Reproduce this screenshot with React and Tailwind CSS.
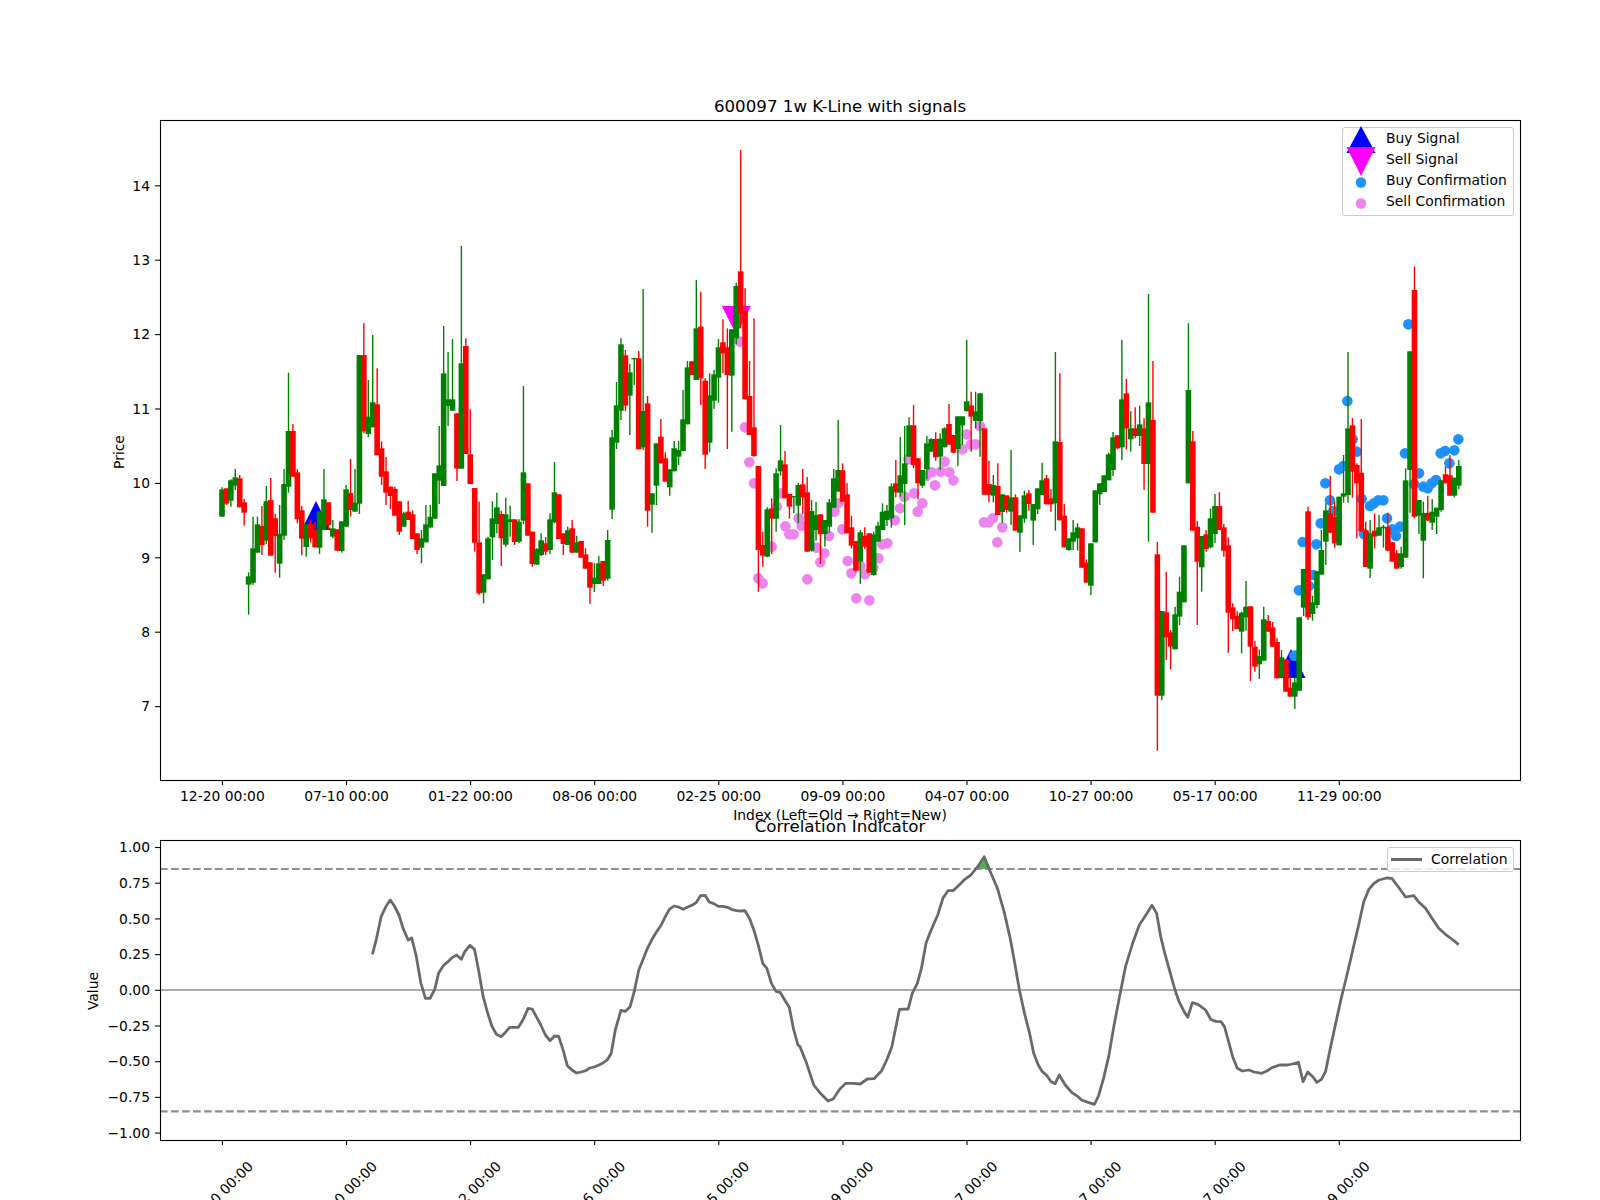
import React from "react";

// candle rows: [isGreen, bodyTop, bodyBottom, wickTop, wickBottom]
// numbers are read off 3x crops, so y = base + n / 3
const rowsA = [
  [1,508,590,502,590],[0,505,551,505,555],[1,481,542,478,560],[1,472,497,447,510],[0,475,562,465,562],[0,547,578,537,617],
  [1,769,794,757,884],[1,685,788,590,794],[1,613,698,590,698],[0,618,675,558,705],[1,544,662,498,672],[0,540,707,474,707],
  [0,595,648,582,758],[1,641,731,555,773],[1,492,647,447,660],[1,333,500,158,518],[0,333,470,312,470],[0,457,598,447,610],
  [0,571,656,558,706],[1,612,681,612,710],[0,612,655,600,668],[0,630,682,605,682],[1,574,683,574,702],[1,538,630,447,630],
  [0,547,615,547,630],[1,625,650,600,655],[0,628,692,628,692],[1,604,693,604,698],[1,508,620,495,620],[0,519,570,417,590],
  [1,548,575,447,575],[1,105,551,105,582],[0,105,334,10,340],[1,290,342,180,352],[1,247,322,45,322],[0,253,406,145,406],
  [0,385,470,364,495],[0,454,518,411,555],[0,500,528,500,567],[0,507,587,500,587],[0,544,635,544,645],[1,580,620,575,620],
  [0,575,600,543,600],[0,583,657,571,657],[0,640,690,640,702],[1,655,683,630,730],[1,613,667,555,667],[1,590,622,555,625],
  [1,460,596,460,596],[1,436,482,318,552],[1,160,498,18,498],[1,238,258,96,318],[1,238,272,57,272],[0,280,446,280,483],
  [1,130,446,-222,446],[0,78,402,55,402],[0,403,492,268,492],[0,504,668,504,695],[0,667,820,545,825],[1,763,818,763,850],
  [1,655,778,650,778],[1,595,652,544,720],[1,562,612,518,640],[0,582,655,572,738],[1,583,674,533,680],[1,598,606,557,650],
  [0,598,666,598,675],[1,605,665,598,670],[1,457,602,198,612],[0,490,647,490,647],[0,635,732,635,740],
];
const rowsB = [
  [1,657,704,655,704],[1,631,675,610,678],[0,640,665,621,675],[1,568,660,550,672],[1,487,577,396,580],[0,493,627,493,627],
  [0,610,642,610,675],[1,601,645,590,645],[0,595,668,570,668],[1,637,668,617,668],[0,633,683,633,683],[0,673,716,655,716],
  [0,697,773,697,822],[1,743,762,700,786],[1,700,762,678,762],[0,693,752,693,768],[1,630,746,600,752],[1,322,539,300,567],
  [1,226,338,156,357],[1,43,242,25,270],[0,76,227,60,243],[1,127,197,102,315],[1,84,88,84,165],[0,85,358,63,358],
  [1,243,352,-123,360],[0,220,542,198,590],[1,490,524,490,608],[1,340,467,340,525],[0,320,400,267,400],[0,385,455,367,455],
  [1,418,472,418,497],[1,355,424,333,424],[1,360,380,333,405],[1,268,363,180,363],[1,112,283,93,283],[0,94,135,94,135],
  [1,-5,150,-150,150],[0,-10,145,-115,225],[0,152,374,145,417],[1,196,338,130,366],[1,133,212,120,237],[1,52,143,27,218],
  [0,37,70,-32,130],[0,52,135,-5,357],[1,-2,137,-2,305],[1,-132,25,-142,43],[0,-176,-50,-540,-5],[0,-58,208,-125,208],
  [0,198,315,93,315],[0,292,378,-35,380],[0,408,660,408,785],[0,645,677,605,710],[1,538,680,532,682],[0,535,566,505,672],
  [1,430,566,415,605],[1,391,424,285,437],[0,403,505,363,505],[0,492,530,492,566],[1,498,502,498,550],[1,465,527,458,580],
  [0,463,502,417,552],[0,487,665,441,665],[1,543,662,510,665],[1,555,600,516,632],[0,553,613,553,702],[1,570,612,570,650],
  [1,517,590,507,608],[1,445,533,417,533],[1,420,485,270,485],[0,421,515,400,515],[0,493,610,460,610],
];
const rowsC = [
  [0,562,617,528,625],[0,603,692,603,697],[1,577,665,570,732],[0,587,620,562,627],[0,580,698,580,698],[1,583,705,575,707],
  [1,557,605,545,605],[1,515,570,490,570],[1,512,540,495,558],[1,439,535,430,563],[0,430,457,360,472],[1,406,458,291,470],
  [1,370,432,258,555],[1,256,350,232,350],[0,256,375,195,385],[0,355,430,355,478],[1,390,437,390,443],[1,310,388,288,418],
  [1,297,335,295,335],[0,297,352,277,362],[1,296,350,280,390],[1,265,322,262,322],[0,252,314,192,314],[0,285,338,285,340],
  [1,229,327,229,378],[1,229,256,229,315],[1,184,213,0,215],[0,196,230,155,335],[1,214,243,155,265],[1,160,243,160,350],
  [0,265,464,265,464],[0,432,464,362,487],[1,435,467,405,487],[0,438,525,370,525],[1,463,516,463,548],[0,466,510,466,518],
  [1,472,515,330,555],[0,472,572,463,572],[1,526,578,526,636],[1,466,536,452,548],[0,460,492,450,512],[1,492,542,492,615],
  [1,445,508,445,522],[1,421,465,368,465],[0,415,493,405,493],[0,475,493,448,515],[1,304,490,36,572],[0,306,541,100,541],
  [0,527,622,492,622],[1,595,630,595,632],[1,577,605,540,630],[1,562,595,550,632],[0,565,683,565,683],[0,668,728,658,728],
  [1,610,737,610,765],[1,451,607,451,607],[1,430,463,430,495],[1,406,456,406,456],[1,343,421,338,421],[1,292,390,276,408],
  [0,286,325,286,328],[1,178,322,0,360],[0,160,265,117,328],[1,265,298,214,335],[0,265,288,202,295],[1,253,288,197,318],
  [0,265,372,235,450],[1,187,372,-138,605],[0,240,518,63,518],
];
const rowsD = [
  [0,673,1097,636,1262],[1,843,1097,843,1110],[0,847,922,726,990],[0,907,950,900,1018],[1,853,958,830,958],[1,785,860,740,885],
  [1,646,817,646,817],[1,180,460,-20,460],[0,334,602,303,602],[0,590,695,573,885],[1,618,712,618,785],[0,613,657,600,665],
  [1,565,652,536,655],[1,528,612,492,640],[0,528,600,487,600],[0,592,662,582,680],[0,646,848,622,968],[0,832,868,820,903],
  [0,858,897,843,897],[1,848,905,845,970],[1,830,862,753,902],[0,829,950,829,1053],[0,950,1010,933,1025],[1,978,1003,958,1047],
  [1,868,992,830,992],[0,873,905,855,905],[0,892,950,876,950],[0,936,1045,925,1045],[1,982,1042,960,1045],[0,988,1085,988,1085],
  [0,1073,1100,1040,1100],[1,1057,1100,1040,1137],[1,862,1082,862,1082],[1,717,833,717,858],[0,544,862,530,870],[1,817,852,797,872],
  [1,724,825,724,835],[1,660,734,600,734],[1,541,635,520,705],[0,550,608,438,610],[0,560,640,515,653],[1,500,646,500,646],
  [1,490,500,375,518],[1,295,495,66,518],[0,286,425,264,503],[0,405,460,400,625],[0,428,605,267,605],[0,600,711,575,711],
  [1,610,716,570,744],[0,602,620,550,655],[1,592,617,555,617],[1,590,595,585,653],[0,591,662,548,662],[0,637,695,637,695],
  [0,670,716,660,716],[1,670,711,650,716],[1,451,683,415,683],[1,64,420,64,548],[0,-120,560,-190,565],[1,510,557,510,612],
  [1,549,632,515,745],[0,549,572,497,572],[1,545,578,507,600],[1,533,560,533,612],[1,451,540,451,545],[0,433,460,410,460],
  [0,436,497,375,497],[1,443,497,443,502],[1,408,467,390,478],
];

const barX = (i) => 222 + 4.433 * i;

const toCandles = (rows, start, base) =>
  rows.map(([up, top, bot, hi, lo], k) => ({
    x: barX(start + k),
    color: up ? "#008000" : "#ff0000",
    top: base + top / 3,
    bot: base + bot / 3,
    hi: base + hi / 3,
    lo: base + lo / 3,
  }));

const candles = [
  ...toCandles(rowsA, 0, 320),
  ...toCandles(rowsB, 71, 330),
  ...toCandles(rowsC, 142, 340),
  ...toCandles(rowsD, 211, 330),
];

const buyDots = [
  [895,328],[883,361],[855,363],[842,370],[868,400],[828,450],[815,460],[803,475],[790,470],[777,430],[762,462],[735,370],
  [745,-17],[720,590],[708,618],[697,598],[681,565],[670,511],[655,511],[642,520],[630,528],[605,507],[612,612],[590,365],
  [578,328],[562,213],[550,408],[537,418],[520,543],[510,511],[496,460],[482,580],[469,643],[428,636],[460,735],[447,768],
  [417,781],[403,977],
].map(([x, y]) => [1160 + x / 3, 330 + y / 3]);

const sellDotsB = [
  [630,35],[645,292],[658,397],[672,460],[685,745],[698,760],[725,650],[740,530],[752,490],[766,589],[778,613],[791,613],
  [806,565],[815,587],[832,748],[860,653],[871,697],[883,670],[897,618],[913,545],[925,520],[937,598],
].map(([x, y]) => [530 + x / 3, 330 + y / 3]);

const sellDotsC = [
  [8,663],[19,700],[34,775],[73,781],[60,703],[46,677],[85,683],[100,655],[112,613],[127,610],[150,541],[165,505],[178,470],
  [207,460],[218,515],[232,490],[243,408],[260,397],[270,436],[287,395],[313,397],[325,421],[299,365],[352,328],[365,283],
  [378,313],[392,313],[405,258],[417,547],[431,547],[444,535],[457,607],[472,562],[190,358],
].map(([x, y]) => [845 + x / 3, 340 + y / 3]);

// correlation line, first half from a crop at x*1.96, y*3
const corrA = [
  [730,463],[738,415],[747,350],[757,318],[765,300],[773,318],[782,345],[790,385],[800,420],[807,414],[816,470],[825,550],
  [834,595],[843,595],[852,568],[860,518],[869,497],[878,485],[887,472],[895,465],[904,478],[911,455],[921,436],[930,448],
  [938,510],[947,590],[955,635],[964,678],[973,703],[982,710],[990,698],[999,682],[1016,682],[1025,660],[1035,625],[1043,627],
  [1052,652],[1060,675],[1069,705],[1078,722],[1087,708],[1095,709],[1104,752],[1112,797],[1121,810],[1130,819],[1139,816],
  [1148,812],[1156,804],[1165,801],[1174,795],[1182,789],[1191,778],[1198,760],[1206,690],[1217,631],[1226,634],[1235,620],
  [1243,575],[1252,510],[1260,480],[1269,445],[1278,418],[1287,395],[1296,375],[1304,350],[1312,328],[1321,318],[1330,321],
  [1339,328],[1347,322],[1356,316],[1365,307],[1373,287],[1382,286],[1390,306],[1399,311],[1408,319],[1417,319],[1426,322],
  [1435,329],[1444,332],[1452,333],[1460,332],[1469,355],[1478,392],[1487,440],[1495,490],[1503,505],[1512,550],[1521,574],
  [1529,577],[1538,600],[1547,622],[1555,685],[1564,735],
].map(([x, y]) => [x / 1.96, 800 + y / 3]);

const corrB = [
  [0,740],[13,790],[27,855],[40,880],[55,903],[65,897],[78,867],[90,850],[105,850],[118,852],[132,837],[145,836],[160,812],
  [170,780],[180,740],[195,628],[212,627],[220,580],[230,550],[238,505],[247,430],[257,390],[270,345],[280,295],[290,272],
  [300,272],[312,255],[323,238],[335,225],[348,200],[361,170],[373,215],[387,265],[400,335],[412,415],[421,490],[430,570],
  [440,640],[450,700],[458,760],[467,795],[475,815],[483,825],[492,845],[500,851],[508,825],[520,855],[533,878],[545,890],
  [552,900],[565,907],[577,913],[585,888],[595,835],[605,770],[615,680],[625,600],[638,500],[652,430],[665,375],[678,345],
  [690,316],[699,340],[707,410],[715,460],[725,515],[735,570],[743,605],[753,635],[760,652],[769,608],[780,613],[795,630],
  [805,658],[815,664],[825,665],[832,680],[840,725],[848,770],[857,805],[867,813],[880,810],[890,816],[905,820],[915,813],
  [925,803],[940,795],[955,795],[965,792],[977,787],[986,845],[995,816],[1005,830],[1013,847],[1022,838],[1030,815],[1040,740],
  [1050,670],[1060,600],[1072,525],[1085,440],[1095,375],[1105,305],[1115,268],[1125,250],[1135,240],[1150,234],[1160,235],
  [1170,255],[1187,291],[1203,287],[1212,305],[1226,325],[1240,358],[1252,385],[1265,403],[1280,420],[1291,434],
].map(([x, y]) => [800 + x / 1.96, 800 + y / 3]);

const corrPoints = [...corrA, ...corrB].map((p) => p.join(",")).join(" ");

const dateLabels = [
  "12-20 00:00", "07-10 00:00", "01-22 00:00", "08-06 00:00", "02-25 00:00",
  "09-09 00:00", "04-07 00:00", "10-27 00:00", "05-17 00:00", "11-29 00:00",
];
const tickX = dateLabels.map((_, k) => 222.4 + 124.1 * k);

const priceTicks = [14, 13, 12, 11, 10, 9, 8, 7].map((p) => ({
  label: String(p),
  y: 483.4 - (p - 10) * 74.4,
}));
const corrTicks = [
  ["1.00", 1], ["0.75", 0.75], ["0.50", 0.5], ["0.25", 0.25], ["0.00", 0],
  ["\u22120.25", -0.25], ["\u22120.50", -0.5], ["\u22120.75", -0.75], ["\u22121.00", -1],
].map(([label, v]) => ({ label, y: 990.3 - v * 142.8 }));

const Triangle = ({ x, top, down, color }) => {
  const h = 29;
  const w = 29;
  const pts = down
    ? `${x - w / 2},${top} ${x + w / 2},${top} ${x},${top + h}`
    : `${x},${top} ${x + w / 2},${top + h} ${x - w / 2},${top + h}`;
  return <polygon points={pts} fill={color} />;
};

const YTicks = ({ ticks }) =>
  ticks.map((t) => (
    <g key={t.label}>
      <line x1="155.1" x2="160" y1={t.y} y2={t.y} stroke="#000" strokeWidth="1.1" />
      <text x="150" y={t.y + 4.7} textAnchor="end" fill="#000">{t.label}</text>
    </g>
  ));

const LegendRow = ({ marker, label }) => (
  <div className="flex h-[21px] items-center gap-[10px]">
    <svg width="30" height="21" viewBox="0 0 30 21" className="overflow-visible">{marker}</svg>
    <span>{label}</span>
  </div>
);

const PriceChart = () => (
  <div className="relative h-[660px] w-[1360px]">
    <svg width="1360" height="660" viewBox="160 120 1360 660" className="overflow-visible text-[13.89px]">
      <Triangle x={316} top={501} color="#0000ff" />
      <Triangle x={736.4} top={306} down color="#ff00ff" />
      <Triangle x={1291} top={649} color="#0000ff" />
      {buyDots.map(([x, y], i) => (
        <circle key={i} cx={x} cy={y} r="5.3" fill="#1e90ff" />
      ))}
      {[...sellDotsB, ...sellDotsC].map(([x, y], i) => (
        <circle key={i} cx={x} cy={y} r="5.3" fill="#ee82ee" />
      ))}
      {candles.map((c, i) => (
        <g key={i}>
          <line x1={c.x} x2={c.x} y1={c.hi} y2={c.lo} stroke={c.color} strokeWidth="1.4" />
          <rect x={c.x - 2.8} y={c.top} width="5.6" height={c.bot - c.top} fill={c.color} />
        </g>
      ))}
      <rect x="160.5" y="120.5" width="1360" height="660" fill="none" stroke="#000" strokeWidth="1.1" />
      <YTicks ticks={priceTicks} />
      {dateLabels.map((d, k) => (
        <g key={d}>
          <line x1={tickX[k]} x2={tickX[k]} y1="780" y2="785" stroke="#000" strokeWidth="1.1" />
          <text x={tickX[k]} y="801" textAnchor="middle" fill="#000">{d}</text>
        </g>
      ))}
      <text x="840" y="820" textAnchor="middle" fill="#000">Index (Left=Old → Right=New)</text>
      <text x="119" y="457" textAnchor="middle" fill="#000" transform="rotate(-90 119 452)">Price</text>
    </svg>
    <div className="absolute right-[6px] top-[7px] h-[89px] w-[172px] rounded-[3px] border border-[#cccccc] bg-white/80 pl-[3px] text-[13.89px] text-black">
      <LegendRow label="Buy Signal" marker={<polygon points="15,0 29.5,27 0.5,27" fill="#0000ff" transform="translate(0,-2)" />} />
      <LegendRow label="Sell Signal" marker={<polygon points="0.5,0 29.5,0 15,29" fill="#ff00ff" transform="translate(0,-2)" />} />
      <LegendRow label="Buy Confirmation" marker={<circle cx="15" cy="12.5" r="5.3" fill="#1e90ff" />} />
      <LegendRow label="Sell Confirmation" marker={<circle cx="15" cy="12.5" r="5.3" fill="#ee82ee" />} />
    </div>
  </div>
);

const CorrelationChart = () => (
  <div className="relative h-[300px] w-[1360px]">
    <svg width="1360" height="300" viewBox="160 840 1360 300" className="overflow-visible text-[13.89px]">
      <polygon points="977,869 984.2,857 991,869" fill="#50b050" />
      <line x1="160" x2="1520" y1="869" y2="869" stroke="#8f8f8f" strokeWidth="2.08" strokeDasharray="7.7 3.3" />
      <line x1="160" x2="1520" y1="1111.4" y2="1111.4" stroke="#8f8f8f" strokeWidth="2.08" strokeDasharray="7.7 3.3" />
      <line x1="160" x2="1520" y1="990" y2="990" stroke="#ababab" strokeWidth="2.08" />
      <polyline points={corrPoints} fill="none" stroke="#696969" strokeWidth="2.78" strokeLinejoin="round" />
      <rect x="160.5" y="840.5" width="1360" height="300" fill="none" stroke="#000" strokeWidth="1.1" />
      <YTicks ticks={corrTicks} />
      {dateLabels.map((d, k) => (
        <g key={d}>
          <line x1={tickX[k]} x2={tickX[k]} y1="1140" y2="1145" stroke="#000" strokeWidth="1.1" />
          <text
            x={tickX[k] - 2}
            y="1198.7"
            textAnchor="middle"
            fill="#000"
            transform={`rotate(-45 ${tickX[k] - 2} 1193.7)`}
          >
            {d}
          </text>
        </g>
      ))}
      <text x="93" y="996" textAnchor="middle" fill="#000" transform="rotate(-90 93 991)">Value</text>
    </svg>
    <div className="absolute right-[6px] top-[7px] flex h-[25px] w-[127px] items-center gap-[9px] rounded-[3px] border border-[#cccccc] bg-white/80 pl-[3px] text-[13.89px] text-black">
      <div className="h-[3px] w-[31px] bg-[#696969]"></div>
      <span>Correlation</span>
    </div>
  </div>
);

const App = () => {
  return (
    <div className="flex h-[1200px] w-[1600px] flex-col overflow-hidden bg-white pl-[160px] font-['DejaVu_Sans',sans-serif] text-black">
      <div className="flex h-[120px] w-[1360px] items-end justify-center pb-[3px] text-[16.67px] leading-[20px]">
        600097 1w K-Line with signals
      </div>
      <PriceChart />
      <div className="flex h-[60px] w-[1360px] items-end justify-center pb-[3px] text-[16.67px] leading-[20px]">
        Correlation Indicator
      </div>
      <CorrelationChart />
    </div>
  );
};

export default App;
